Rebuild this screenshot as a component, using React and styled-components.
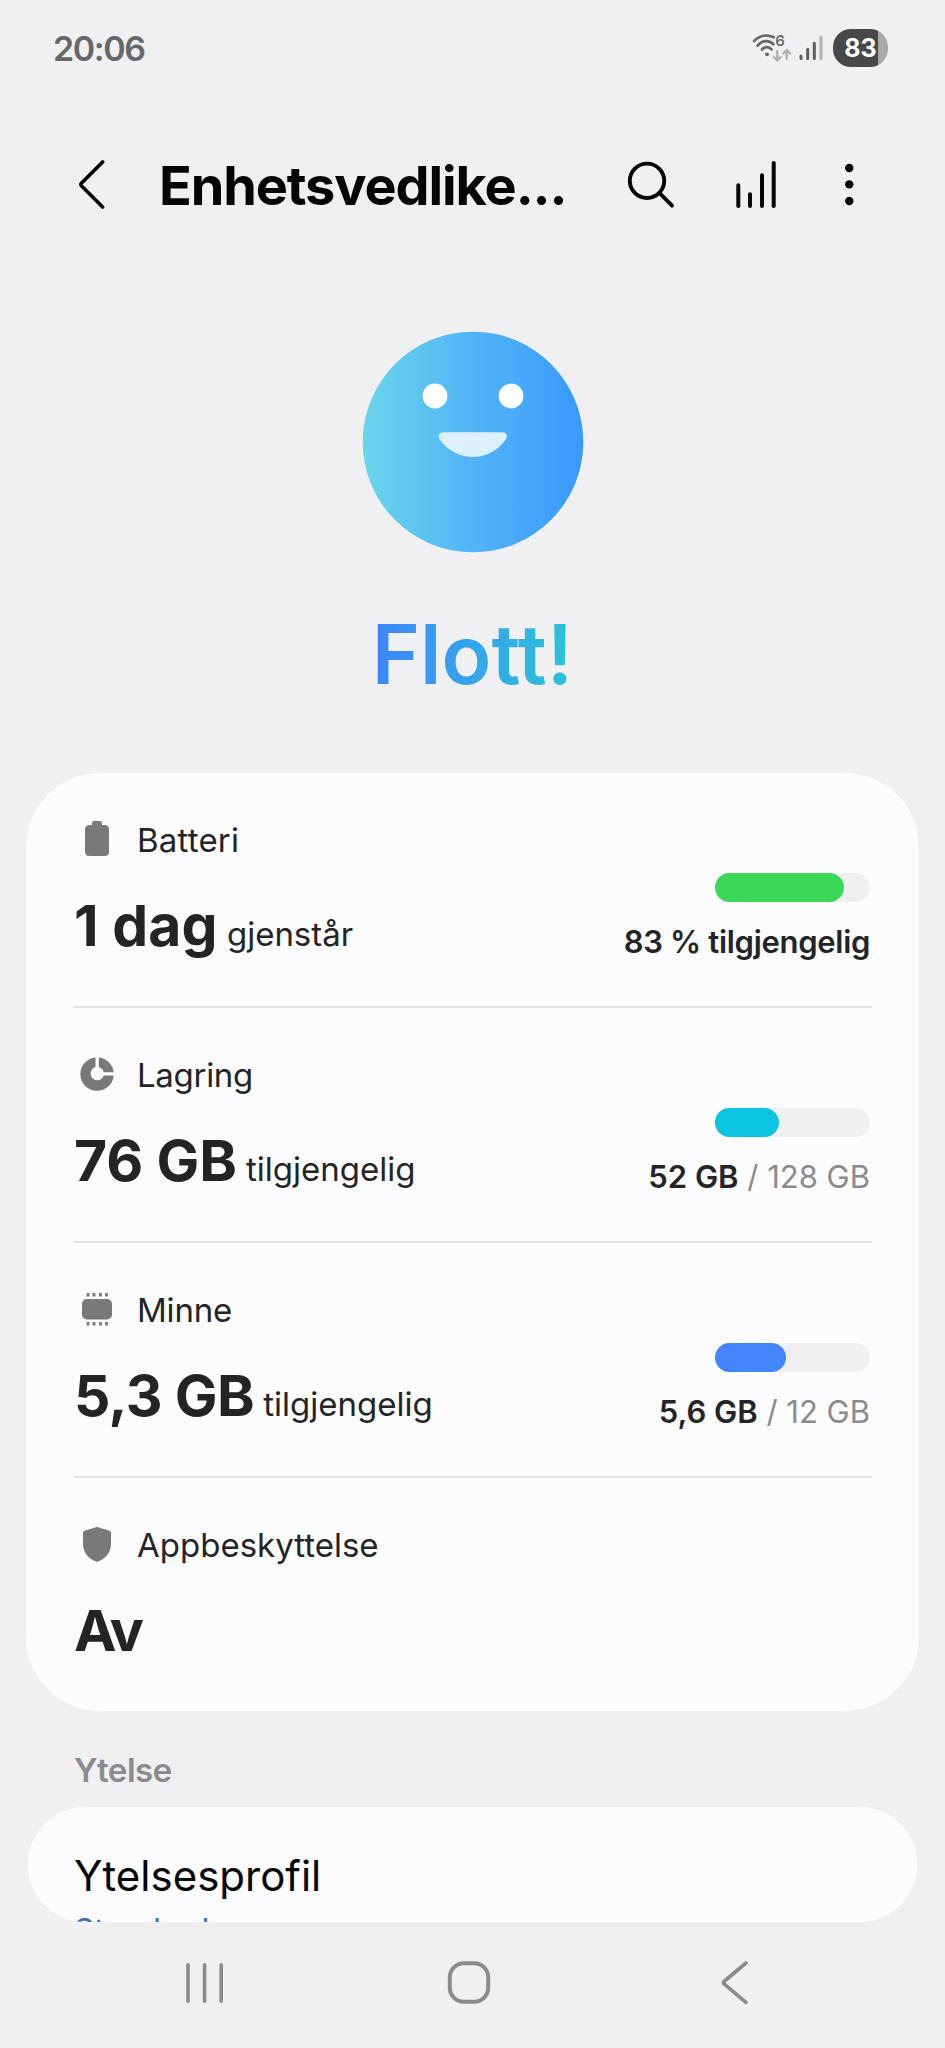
import styled, { createGlobalStyle } from "styled-components";

const GlobalStyle = createGlobalStyle`
  * { box-sizing: border-box; }
  body {
    margin: 0;
    background: #f0f0f3;
    font-family: Inter, "Liberation Sans", sans-serif;
    color: #242426;
  }
`;

const Screen = styled.div`
  display: flex;
  flex-direction: column;
  width: 945px;
  height: 2048px;
  overflow: hidden;
`;

const StatusBar = styled.header`
  display: flex;
  align-items: center;
  justify-content: space-between;
  height: 96px;
  padding: 0 57px 0 53px;
`;

const Text = styled.span`
  font-size: ${props => props.$size}px;
  font-weight: ${props => props.$weight || 400};
  letter-spacing: ${props => props.$ls || 0}px;
  color: ${props => props.$color || "inherit"};
  line-height: 1.2;
  white-space: pre;
`;

const Clock = styled.div`
  padding-top: 2px;
`;

const StatusIcons = styled.div`
  display: flex;
  align-items: center;
  gap: 7px;
`;

const BatteryPill = styled.div`
  display: flex;
  align-items: center;
  justify-content: center;
  width: 55px;
  height: 38px;
  margin-left: 3px;
  border-radius: 18px;
  background: linear-gradient(90deg, #48484a 82%, #a9a9ab 82%);
`;

const Toolbar = styled.div`
  display: flex;
  align-items: center;
  height: 176px;
  padding: 2px 0 0 76px;
`;

const Title = styled.div`
  width: 467px;
  margin-left: 51px;
  padding-top: 2px;
`;

const Actions = styled.div`
  display: flex;
  align-items: center;
`;

const ChartSlot = styled.div`
  display: flex;
  margin: 0 66px 0 58px;
`;

const Hero = styled.section`
  display: flex;
  flex-direction: column;
  align-items: center;
  height: 501px;
  padding-top: 59px;
`;

const Verdict = styled.div`
  margin-top: 49px;
  font-size: 82px;
  font-weight: 600;
  line-height: 106px;
  background: linear-gradient(90deg, #3d86ff, #2cc3d8);
  background-clip: text;
  color: transparent;
`;

const Card = styled.section`
  height: 938px;
  margin: 0 26px;
  padding: 0 47px 0 48px;
  border-radius: 74px;
  background: #fcfcff;
`;

const Row = styled.div`
  display: flex;
  justify-content: space-between;
  height: 235px;
  padding-top: 45px;
  border-bottom: ${props => (props.$last ? "none" : "2px solid #e2e2e5")};
`;

const RowLabel = styled.div`
  display: flex;
  align-items: center;
  gap: 17px;
  height: 42px;

  span {
    padding-top: 3px;
  }
`;

const RowValue = styled.div`
  display: flex;
  align-items: baseline;
  height: 72px;
  margin-top: 31.5px;
`;

const Usage = styled.div`
  display: flex;
  flex-direction: column;
  align-items: flex-end;
  padding: 55px 2px 0 0;
`;

const Track = styled.div`
  width: 155px;
  height: 29px;
  margin-bottom: 21px;
  border-radius: 15px;
  background: #f0f0f2;
`;

const Fill = styled.div`
  height: 100%;
  border-radius: 15px;
  background: ${props => props.$color};
`;

const SectionTitle = styled.div`
  height: 96px;
  padding: 40px 0 0 74px;
`;

const ProfileCard = styled.section`
  height: 115px;
  margin: 0 28px;
  padding: 44px 46px 0;
  border-radius: 57px;
  background: #fcfcff;
  overflow: hidden;
`;

const ProfileLine = styled.div`
  height: ${props => props.$height}px;
`;

const NavBar = styled.nav`
  display: flex;
  align-items: center;
  gap: 220px;
  height: 121px;
  padding-left: 183px;
`;

const HomeSlot = styled.div`
  display: flex;
  margin-right: 8px;
`;

const WifiIcon = () => (
  <svg width="40" height="30" viewBox="0 0 40 30" overflow="visible" fill="none" stroke="#67676a" strokeWidth="2.7" strokeLinecap="round">
    <path d="M2.200 8C7.500 2 15.500 1.200 21.800 4.200" />
    <path d="M5.600 12.600C10 6.900 17.500 6.700 21.500 11.300" />
    <path d="M10 16.500C12.700 13.400 17 13.400 19.600 16.300" />
    <circle cx="15" cy="21.300" r="1.900" fill="#67676a" stroke="none" />
    <path d="M25.300 18v9M21.900 24l3.400 3.500L28.700 24M34.700 26v-8.500M31.300 20.500l3.400-3.500 3.400 3.500" stroke="#acacaf" strokeWidth="2.200" />
    <text x="23.200" y="13.300" fill="#67676a" stroke="none" fontSize="15" fontWeight="600">6</text>
  </svg>
);

const SignalIcon = () => (
  <svg width="24" height="26" viewBox="0 0 24 26" strokeWidth="3" strokeLinecap="round" stroke="#5d5d60">
    <path d="M2 23.500v-2.500M8.700 23.500v-9.300M15.300 23.500V8.200" />
    <path d="M22 23.500V2.200" stroke="#b4b4b6" />
  </svg>
);

const BackIcon = () => (
  <svg width="32" height="50" viewBox="0 0 32 50" fill="none" stroke="#050505" strokeWidth="3.700" strokeLinecap="round" strokeLinejoin="round">
    <path d="M26.600 2L5.600 23Q4.300 24.500 5.600 26L26.600 47" />
  </svg>
);

const SearchIcon = () => (
  <svg width="50" height="50" viewBox="0 0 50 50" fill="none" stroke="#050505" strokeWidth="3.900" strokeLinecap="round">
    <circle cx="21" cy="20.800" r="17.200" />
    <path d="M33.500 33L46 45.600" />
  </svg>
);

const ChartIcon = () => (
  <svg width="44" height="50" viewBox="0 0 44 50" fill="none" stroke="#050505" strokeWidth="4" strokeLinecap="round">
    <path d="M4.300 25.300V46M16 34.300V46M28 15.300V46M39.700 3V46" />
  </svg>
);

const MoreIcon = () => (
  <svg width="10" height="44" viewBox="0 0 10 44" fill="#050505">
    <circle cx="5.300" cy="5" r="4.200" />
    <circle cx="5.300" cy="21.400" r="4.200" />
    <circle cx="5.300" cy="38" r="4.200" />
  </svg>
);

const Face = () => (
  <svg width="222" height="222" viewBox="0 0 222 222">
    <defs>
      <linearGradient id="face">
        <stop offset="0" stopColor="#6ad6ea" />
        <stop offset=".5" stopColor="#52b4f6" />
        <stop offset="1" stopColor="#3999ff" />
      </linearGradient>
    </defs>
    <circle cx="111" cy="111" r="110.300" fill="url(#face)" />
    <circle cx="73" cy="65" r="12.400" fill="#fff" />
    <circle cx="149" cy="65" r="12.400" fill="#fff" />
    <path d="M81 101.300h59.500c4 0 5.500 4 3.500 7C136 119.500 124 126 111 126s-26-6.500-33.500-17.700c-2-3-.5-7 3.500-7z" fill="#dcf1fd" />
  </svg>
);

const ICONS = {
  battery: (
    <path d="M20 4h6q2 0 2 2v2h2.500q4.500 0 4.500 4.500v22q0 4.500-4.500 4.500h-15q-4.500 0-4.500-4.500v-22Q11 8 15.500 8H18V6q0-2 2-2z" />
  ),
  storage: (
    <>
      <path d="M21.500 5.500v9.600A6.700 6.700 0 1 0 29.700 23.500h10A16.700 16.700 0 1 1 21.500 5.500z" />
      <path d="M24.800 5.500A16.700 16.700 0 0 1 39.700 20.200h-10a6.700 6.700 0 0 0-4.900-4.900z" />
    </>
  ),
  memory: (
    <>
      <rect x="8" y="12" width="30" height="20.500" rx="5" />
      <path d="M14 6v3.500M20 6v3.500M26.500 6v3.500M32.500 6v3.500M14 35v3.500M20 35v3.500M26.500 35v3.500M32.500 35v3.500" stroke="#79797b" strokeWidth="2.800" />
    </>
  ),
  shield: (
    <path d="M21.800 5.300q1.200-.5 2.400 0L35.500 8.700q1.500.5 1.500 2V22C37 30 32 36.500 24 39.600q-1 .4-2 0C14 36.500 9 30 9 22V10.700q0-1.500 1.500-2z" />
  ),
};

const RowIcon = ({ name }) => (
  <svg width="46" height="44" viewBox="0 0 46 44" fill="#79797b">
    {ICONS[name]}
  </svg>
);

const rows = [
  { icon: "battery", label: "Batteri", labelLs: 0.2, value: "1 dag", valueLs: 0.1, unit: "gjenstår", fill: 83.5, color: "#3bd857", strong: "83 % tilgjengelig", strongLs: -0.32 },
  { icon: "storage", label: "Lagring", labelLs: -0.3, value: "76 GB", valueLs: -0.1, unit: "tilgjengelig", fill: 41, color: "#0bc4e2", strong: "52 GB", rest: " / 128 GB" },
  { icon: "memory", label: "Minne", labelLs: -0.2, value: "5,3 GB", valueLs: -0.6, unit: "tilgjengelig", fill: 46, color: "#4385ff", strong: "5,6 GB", rest: " / 12 GB" },
  { icon: "shield", label: "Appbeskyttelse", value: "Av", valueLs: -3 },
];

export default function App() {
  return (
    <>
      <GlobalStyle />
      <Screen>
        <StatusBar>
          <Clock>
            <Text $size={34} $weight={600} $ls={-1.4} $color="#67676a">20:06</Text>
          </Clock>
          <StatusIcons>
            <WifiIcon />
            <SignalIcon />
            <BatteryPill>
              <Text $size={25} $weight={700} $color="#fff">83</Text>
            </BatteryPill>
          </StatusIcons>
        </StatusBar>

        <Toolbar>
          <BackIcon />
          <Title>
            <Text $size={54} $weight={700} $ls={-1.1} $color="#050505">Enhetsvedlike...</Text>
          </Title>
          <Actions>
            <SearchIcon />
            <ChartSlot>
              <ChartIcon />
            </ChartSlot>
            <MoreIcon />
          </Actions>
        </Toolbar>

        <Hero>
          <Face />
          <Verdict>Flott!</Verdict>
        </Hero>

        <Card>
          {rows.map(row => (
            <Row key={row.label} $last={!row.strong}>
              <div>
                <RowLabel>
                  <RowIcon name={row.icon} />
                  <Text $size={33} $ls={row.labelLs}>{row.label}</Text>
                </RowLabel>
                <RowValue>
                  <Text $size={57} $weight={700} $ls={row.valueLs}>{row.value}</Text>
                  {row.unit && <Text $size={33}> {row.unit}</Text>}
                </RowValue>
              </div>
              {row.strong && (
                <Usage>
                  <Track>
                    <Fill $color={row.color} style={{ width: `${row.fill}%` }} />
                  </Track>
                  <div>
                    <Text $size={31} $weight={600} $ls={row.strongLs}>{row.strong}</Text>
                    {row.rest && <Text $size={31} $color="#8b8b8e">{row.rest}</Text>}
                  </div>
                </Usage>
              )}
            </Row>
          ))}
        </Card>

        <SectionTitle>
          <Text $size={33} $weight={600} $ls={-0.5} $color="#8b8b8e">Ytelse</Text>
        </SectionTitle>
        <ProfileCard>
          <ProfileLine $height={61}>
            <Text $size={42} $color="#050505">Ytelsesprofil</Text>
          </ProfileLine>
          <ProfileLine $height={40}>
            <Text $size={32} $ls={-0.2} $color="#3c6cc0">Standard</Text>
          </ProfileLine>
        </ProfileCard>

        <NavBar>
          <svg width="44" height="44" viewBox="0 0 44 44" stroke="#8b8b8d" strokeWidth="3.600" strokeLinecap="round">
            <path d="M5 3.800v36.400M21.600 3.800v36.400M38.200 3.800v36.400" />
          </svg>
          <HomeSlot>
            <svg width="44" height="44" viewBox="0 0 44 44" fill="none" stroke="#8b8b8d" strokeWidth="4">
              <rect x="2.800" y="2.300" width="38.400" height="38.400" rx="14" />
            </svg>
          </HomeSlot>
          <svg width="32" height="44" viewBox="0 0 32 44" fill="none" stroke="#8b8b8d" strokeWidth="3.600" strokeLinecap="round" strokeLinejoin="round">
            <path d="M27 2L5 20.500Q3.800 21.700 5 22.900L27 41.300" />
          </svg>
        </NavBar>
      </Screen>
    </>
  );
}
